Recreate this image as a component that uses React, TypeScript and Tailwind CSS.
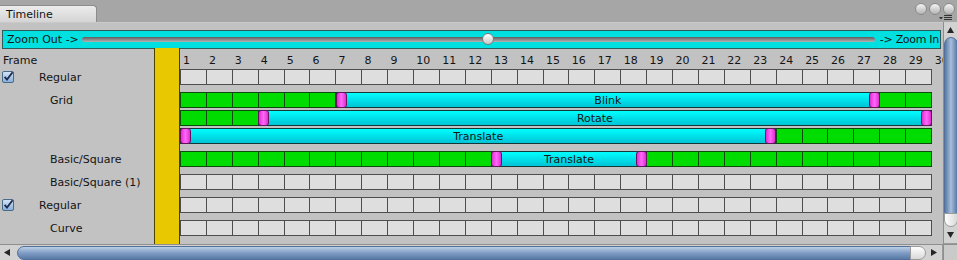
import React from 'react';

const FRAMES = 29;
const CELL = 752 / FRAMES;

type Bar = { label: string; from: number; to: number };
type Lane = { green: boolean; bars?: Bar[] };
type Track = { label: string; checkbox?: boolean; lanes: Lane[] };

const tracks: Track[] = [
  { label: 'Regular', checkbox: true, lanes: [{ green: false }] },
  {
    label: 'Grid',
    lanes: [
      { green: true, bars: [{ label: 'Blink', from: 7, to: 28 }] },
      { green: true, bars: [{ label: 'Rotate', from: 4, to: 30 }] },
      { green: true, bars: [{ label: 'Translate', from: 1, to: 24 }] },
    ],
  },
  { label: 'Basic/Square', lanes: [{ green: true, bars: [{ label: 'Translate', from: 13, to: 19 }] }] },
  { label: 'Basic/Square (1)', lanes: [{ green: false }] },
  { label: 'Regular', checkbox: true, lanes: [{ green: false }] },
  { label: 'Curve', lanes: [{ green: false }] },
];

const Checkbox: React.FC = () => (
  <svg width="12" height="12" viewBox="0 0 12 12" className="shrink-0">
    <defs>
      <linearGradient id="cb" x1="0" y1="0" x2="0" y2="1">
        <stop offset="0" stopColor="#d6e6f6" />
        <stop offset="1" stopColor="#86aed8" />
      </linearGradient>
    </defs>
    <rect x="0.5" y="0.5" width="11" height="11" rx="1.5" fill="url(#cb)" stroke="#4a6a8a" />
    <path d="M2.6 5.8 L5 8.6 L10.6 1.2" fill="none" stroke="#1a2a50" strokeWidth="1.8" />
  </svg>
);

// clip/key bar drawn over a lane
const TimelineBar: React.FC<{ bar: Bar }> = ({ bar }) => (
  <div
    className="absolute top-0 h-[16px] border border-[#143838] bg-linear-to-b from-[#00ffff] to-[#00c4d6] flex items-center justify-center"
    style={{ left: (bar.from - 1) * CELL, width: (bar.to - bar.from) * CELL }}
  >
    <div className="absolute -left-px -top-px -bottom-px w-[11px] rounded-[3px] border border-[#6a1060] bg-linear-to-r from-[#e02ad2] via-[#ff66f8] to-[#e02ad2]" />
    <div className="absolute -right-px -top-px -bottom-px w-[11px] rounded-[3px] border border-[#6a1060] bg-linear-to-r from-[#e02ad2] via-[#ff66f8] to-[#e02ad2]" />
    <span className="text-[11px] leading-[14px] pt-px text-[#141414]">{bar.label}</span>
  </div>
);

const LaneRow: React.FC<{ lane: Lane }> = ({ lane }) => (
  <div className="relative h-[16px] w-[752px]">
    <div
      className={
        lane.green
          ? 'grid grid-cols-[repeat(29,minmax(0,1fr))] gap-px p-px h-full bg-[#0e4a0e]'
          : 'grid grid-cols-[repeat(29,minmax(0,1fr))] gap-px p-px h-full bg-[#4e4e4e]'
      }
    >
      {Array.from({ length: FRAMES }).map((_, i) => (
        <div key={i} className={lane.green ? 'bg-[#00dc00]' : 'bg-[#dedede]'} />
      ))}
    </div>
    {lane.bars?.map((b, i) => <TimelineBar key={i} bar={b} />)}
  </div>
);

const Arrow: React.FC<{ dir: 'up' | 'down' | 'left' | 'right' }> = ({ dir }) => {
  const d = {
    up: 'M0 6 L3.5 0 L7 6 Z',
    down: 'M0 0 L7 0 L3.5 6 Z',
    left: 'M6 0 L6 7 L0 3.5 Z',
    right: 'M0 0 L6 3.5 L0 7 Z',
  }[dir];
  const vertical = dir === 'up' || dir === 'down';
  return (
    <svg width={vertical ? 7 : 6} height={vertical ? 6 : 7} viewBox={vertical ? '0 0 7 6' : '0 0 6 7'}>
      <path d={d} fill="#262626" />
    </svg>
  );
};

const App: React.FC = () => {
  return (
    <div className="w-[957px] h-[260px] overflow-hidden bg-[#a6a6a6] font-['DejaVu_Sans',sans-serif] text-[11px] text-[#141414]">
      {/* title strip */}
      <div className="h-[22px] flex items-end justify-between">
        <div className="h-[17px] w-[97px] rounded-tr-[4px] border-t border-r border-[#8c8c8c] bg-linear-to-b from-[#ececec] to-[#d4d4d4] pl-[6px] pt-px leading-[16px]">
          Timeline
        </div>
        <div className="self-stretch flex flex-col items-end pr-[2px] pt-[3px]">
          <div className="flex gap-[2px]">
            {[0, 1, 2].map(i => (
              <div
                key={i}
                className="w-[12px] h-[12px] rounded-full border border-[#8a8a8a] bg-linear-to-b from-[#f4f4f4] to-[#b4b4b4]"
              />
            ))}
          </div>
          <svg width="14" height="6" viewBox="0 0 14 6" className="mr-[2px]">
            <path d="M0 2 L4 2 L2 4.5 Z" fill="#333" />
            <rect x="5" y="0" width="8" height="1" fill="#333" />
            <rect x="5" y="2" width="8" height="1" fill="#333" />
            <rect x="5" y="4" width="8" height="1" fill="#333" />
          </svg>
        </div>
      </div>

      <div className="flex h-[238px]">
        <div className="w-[943px] flex flex-col">
          <div className="h-[222px] bg-[#c2c2c2] border-t border-[#cacaca] flex flex-col">
            {/* zoom bar */}
            <div className="mt-[7px] ml-[2px] mr-[2px] h-[19px] border border-[#2e5c5c] bg-[#00e0e0] flex items-center overflow-hidden whitespace-nowrap">
              <span className="pl-[4px] pt-px shrink-0">Zoom Out -&gt;</span>
              <div className="relative ml-[3px] w-[793px] shrink-0 h-[5px] rounded-full bg-linear-to-b from-[#5e5e5e] to-[#b4b4b4]">
                <div className="absolute left-[400px] -top-[4px] w-[12px] h-[12px] rounded-full border border-[#7a7a7a] bg-linear-to-b from-[#ffffff] to-[#c8c8c8]" />
              </div>
              <span className="pl-[5px] pt-px shrink-0 tracking-[-0.3px]">-&gt; Zoom In</span>
            </div>

            <div className="flex flex-1 min-h-0">
              {/* labels */}
              <div className="w-[154px] shrink-0 flex flex-col">
                <div className="h-[20px] flex items-end pl-[3px]">Frame</div>
                {tracks.map((t, i) => (
                  <div
                    key={i}
                    className="pb-[7px]"
                    style={{ height: t.lanes.length * 18 - 2 + 7 }}
                  >
                    <div className={t.checkbox ? 'h-[16px] flex items-center pl-[2px]' : 'h-[16px] flex items-center pl-[50px]'}>
                      {t.checkbox && <Checkbox />}
                      <span className={t.checkbox ? 'ml-[25px] pt-[2px]' : 'pt-[2px]'}>{t.label}</span>
                    </div>
                  </div>
                ))}
              </div>

              {/* current frame column */}
              <div className="w-[26px] shrink-0 -mt-px bg-[#e8c800] border-x border-[#4c4200]" />

              {/* frames */}
              <div className="flex-1 min-w-0 overflow-hidden flex flex-col">
                <div className="h-[20px] grid grid-cols-[repeat(30,25.93px)] items-end">
                  {Array.from({ length: 30 }).map((_, i) => (
                    <span key={i} className="pl-[3px]">{i + 1}</span>
                  ))}
                </div>
                {tracks.map((t, i) => (
                  <div key={i} className="flex flex-col gap-[2px] pb-[7px]">
                    {t.lanes.map((lane, j) => (
                      <LaneRow key={j} lane={lane} />
                    ))}
                  </div>
                ))}
              </div>
            </div>
          </div>

          {/* horizontal scrollbar */}
          <div className="h-[16px] border-t border-[#8e8e8e] bg-[#d2d2d2] flex items-center">
            <div className="w-[17px] flex justify-center pr-[3px]">
              <Arrow dir="left" />
            </div>
            <div className="flex-1 h-[14px] rounded-full border border-[#52709a] bg-linear-to-b from-[#bcd0e6] via-[#7f9cc4] to-[#587aa6]" />
            <div className="w-[16px] h-[14px] -ml-[8px] rounded-r-full border border-[#9a9a9a] bg-linear-to-b from-[#ffffff] to-[#d8d8d8]" />
            <div className="w-[17px] h-full flex items-center justify-center border-r border-[#9a9a9a]">
              <Arrow dir="right" />
            </div>
          </div>
        </div>

        {/* vertical scrollbar */}
        <div className="w-[14px] flex flex-col">
          <div className="h-[222px] border-l border-[#8e8e8e] bg-[#d2d2d2] flex flex-col items-center">
            <div className="h-[15px] flex items-center justify-center pt-[1px]">
              <Arrow dir="up" />
            </div>
            <div className="w-[14px] flex-1 rounded-full border border-[#52709a] bg-linear-to-r from-[#587aa6] via-[#a8bedc] to-[#587aa6]" />
            <div className="w-[14px] h-[14px] -mt-[6px] rounded-b-full border border-[#9a9a9a] bg-linear-to-r from-[#ffffff] to-[#d8d8d8]" />
            <div className="h-[17px] flex items-center justify-center border-b border-[#9a9a9a] w-full">
              <Arrow dir="down" />
            </div>
          </div>
          <div className="h-[16px] bg-[#cacaca] border-l border-t border-[#8e8e8e]" />
        </div>
      </div>
    </div>
  );
};

export default App;
